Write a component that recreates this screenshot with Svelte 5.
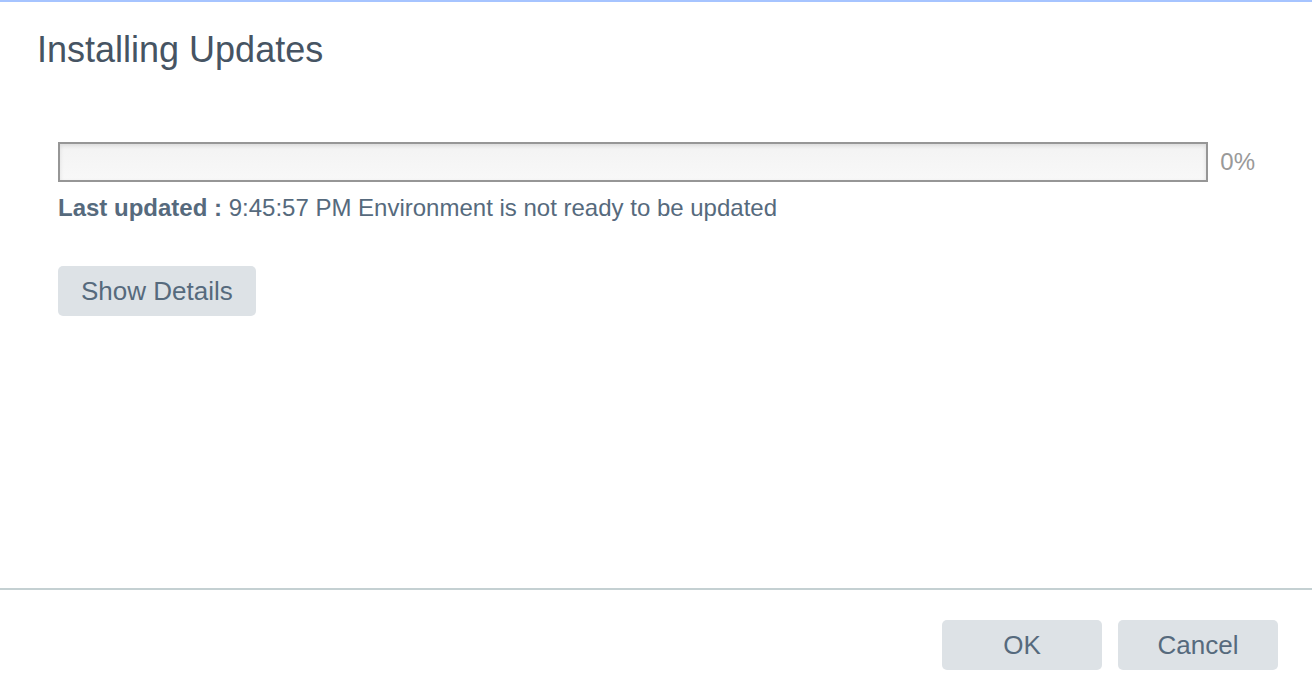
<script>
  let progress = $state(0);
  const updated = '9:45:57 PM';
  const message = 'Environment is not ready to be updated';
</script>

<main class="dialog">
  <h1>Installing Updates</h1>
  <section class="content">
    <div class="progress-row">
      <div class="track" role="progressbar" aria-labelledby="status" aria-valuemin="0" aria-valuemax="100" aria-valuenow={progress}>
        <div class="fill" style="width: {progress}%"></div>
      </div>
      <span class="percent">{progress}%</span>
    </div>
    <p id="status"><strong>Last updated :</strong> {updated} {message}</p>
    <button type="button" class="details">Show Details</button>
  </section>
  <footer>
    <button type="button">OK</button>
    <button type="button">Cancel</button>
  </footer>
</main>

<style>
  :global(body) {
    margin: 0;
    background: #fff;
  }
  .dialog {
    box-sizing: border-box;
    min-height: 100vh;
    display: flex;
    flex-direction: column;
    border-top: 2px solid #a6c4ff;
    font-family: "Liberation Sans", Arial, sans-serif;
    color: #566a7d;
  }
  h1 {
    margin: 0;
    padding: 28px 37px 0;
    font-size: 36px;
    line-height: 40px;
    font-weight: 400;
    color: #465463;
  }
  .content {
    flex: 1;
    padding: 72px 57px 0 58px;
  }
  .progress-row {
    display: flex;
    align-items: center;
    gap: 12px;
  }
  .track {
    box-sizing: border-box;
    flex: 1;
    height: 40px;
    border: 2px solid #969696;
    background: linear-gradient(#f3f3f3, #f8f8f8);
    box-shadow: inset 0 2px 4px rgba(0, 0, 0, 0.1);
  }
  .fill {
    height: 100%;
    background: #5c9ded;
  }
  .percent {
    font-size: 24px;
    line-height: 28px;
    color: #999;
  }
  p {
    margin: 12px 0 44px;
    font-size: 24px;
    line-height: 28px;
  }
  button {
    min-width: 160px;
    height: 50px;
    padding: 0 23px;
    border: 0;
    border-radius: 5px;
    background: #dde2e6;
    color: #566a7d;
    font-family: inherit;
    font-size: 26px;
    line-height: 30px;
  }
  footer {
    display: flex;
    justify-content: flex-end;
    gap: 16px;
    padding: 30px 34px 28px;
    border-top: 2px solid #c4d0d2;
  }
</style>
